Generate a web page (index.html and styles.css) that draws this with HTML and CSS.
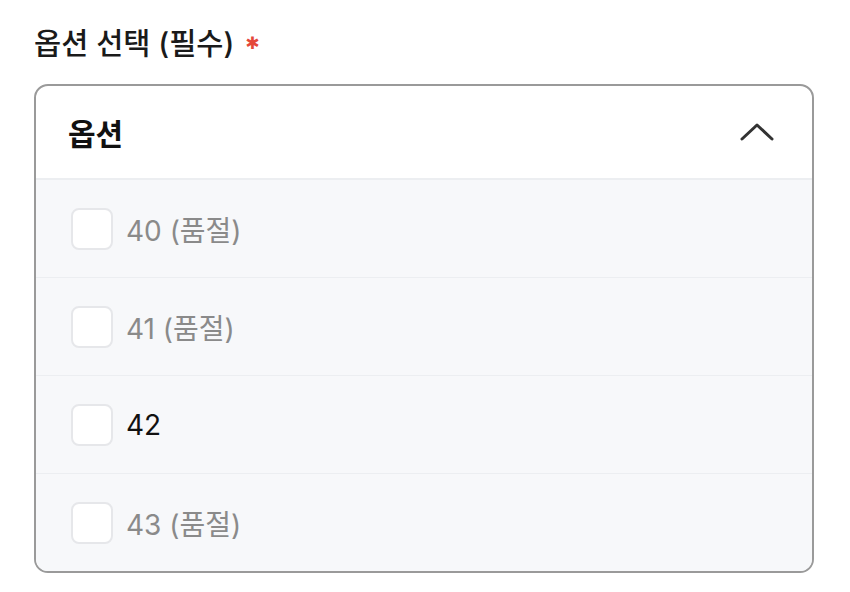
FILE: index.html
```html
<!DOCTYPE html>
<html lang="ko">
  <head>
    <meta charset="UTF-8" />
    <meta name="viewport" content="width=device-width, initial-scale=1.0" />
    <title>옵션 선택</title>
    <link rel="stylesheet" href="styles.css">
  </head>
  <body>
    <div class="field">
      <div class="field-label">옵션 선택 (필수) <span class="required">✱</span></div>

      <div class="select-box">
        <div class="select-head">
          <span class="select-title">옵션</span>
          <svg class="chevron" width="34" height="20" viewBox="0 0 34 20">
            <path d="M2 17 L17 3 L32 17" fill="none" stroke="#333" stroke-width="3" stroke-linecap="round" stroke-linejoin="round" />
          </svg>
        </div>

        <div class="option-list">
          <label class="option sold-out">
            <span class="check"></span>
            <span class="option-text">40 (품절)</span>
          </label>
          <label class="option sold-out">
            <span class="check"></span>
            <span class="option-text">41 (품절)</span>
          </label>
          <label class="option">
            <span class="check"></span>
            <span class="option-text">42</span>
          </label>
          <label class="option sold-out">
            <span class="check"></span>
            <span class="option-text">43 (품절)</span>
          </label>
        </div>
      </div>
    </div>
  </body>
</html>
```

FILE: styles.css
```css
body {
  margin: 0;
  padding: 0;
  background: #fff;
  color: #111;
  font-family: Inter, "Noto Sans CJK KR", sans-serif;
}

.field {
  padding: 22px 36px 0 34px;
}

.field-label {
  font-size: 29.5px;
  font-weight: 500;
  line-height: 42px;
  color: #1a1a1a;
  margin-bottom: 20px;
}

.required {
  color: #e4483a;
  font-family: "DejaVu Sans", sans-serif;
  font-size: 17px;
  font-weight: 700;
  margin-left: 3px;
  vertical-align: 5px;
}

.select-box {
  border: 2px solid #9a9a9a;
  border-radius: 14px;
  overflow: hidden;
  background: #fff;
}

.select-head {
  display: flex;
  align-items: center;
  justify-content: space-between;
  height: 92px;
  padding: 0 38px 0 32px;
  border-bottom: 2px solid #eceef1;
}

.select-title {
  font-size: 30px;
  font-weight: 700;
  color: #111;
}

.option-list {
  background: #f7f8fa;
}

.option {
  display: flex;
  align-items: center;
  height: 97px;
  padding: 0 35px;
  border-top: 1px solid #eceef1;
}

.option:first-child {
  border-top: none;
}

.check {
  width: 38px;
  height: 38px;
  border: 2px solid #e6e7ea;
  border-radius: 8px;
  background: #fff;
  margin-right: 13px;
}

.option-text {
  font-size: 28px;
  color: #111;
}

.sold-out .option-text {
  color: #8a8a8a;
}
```
